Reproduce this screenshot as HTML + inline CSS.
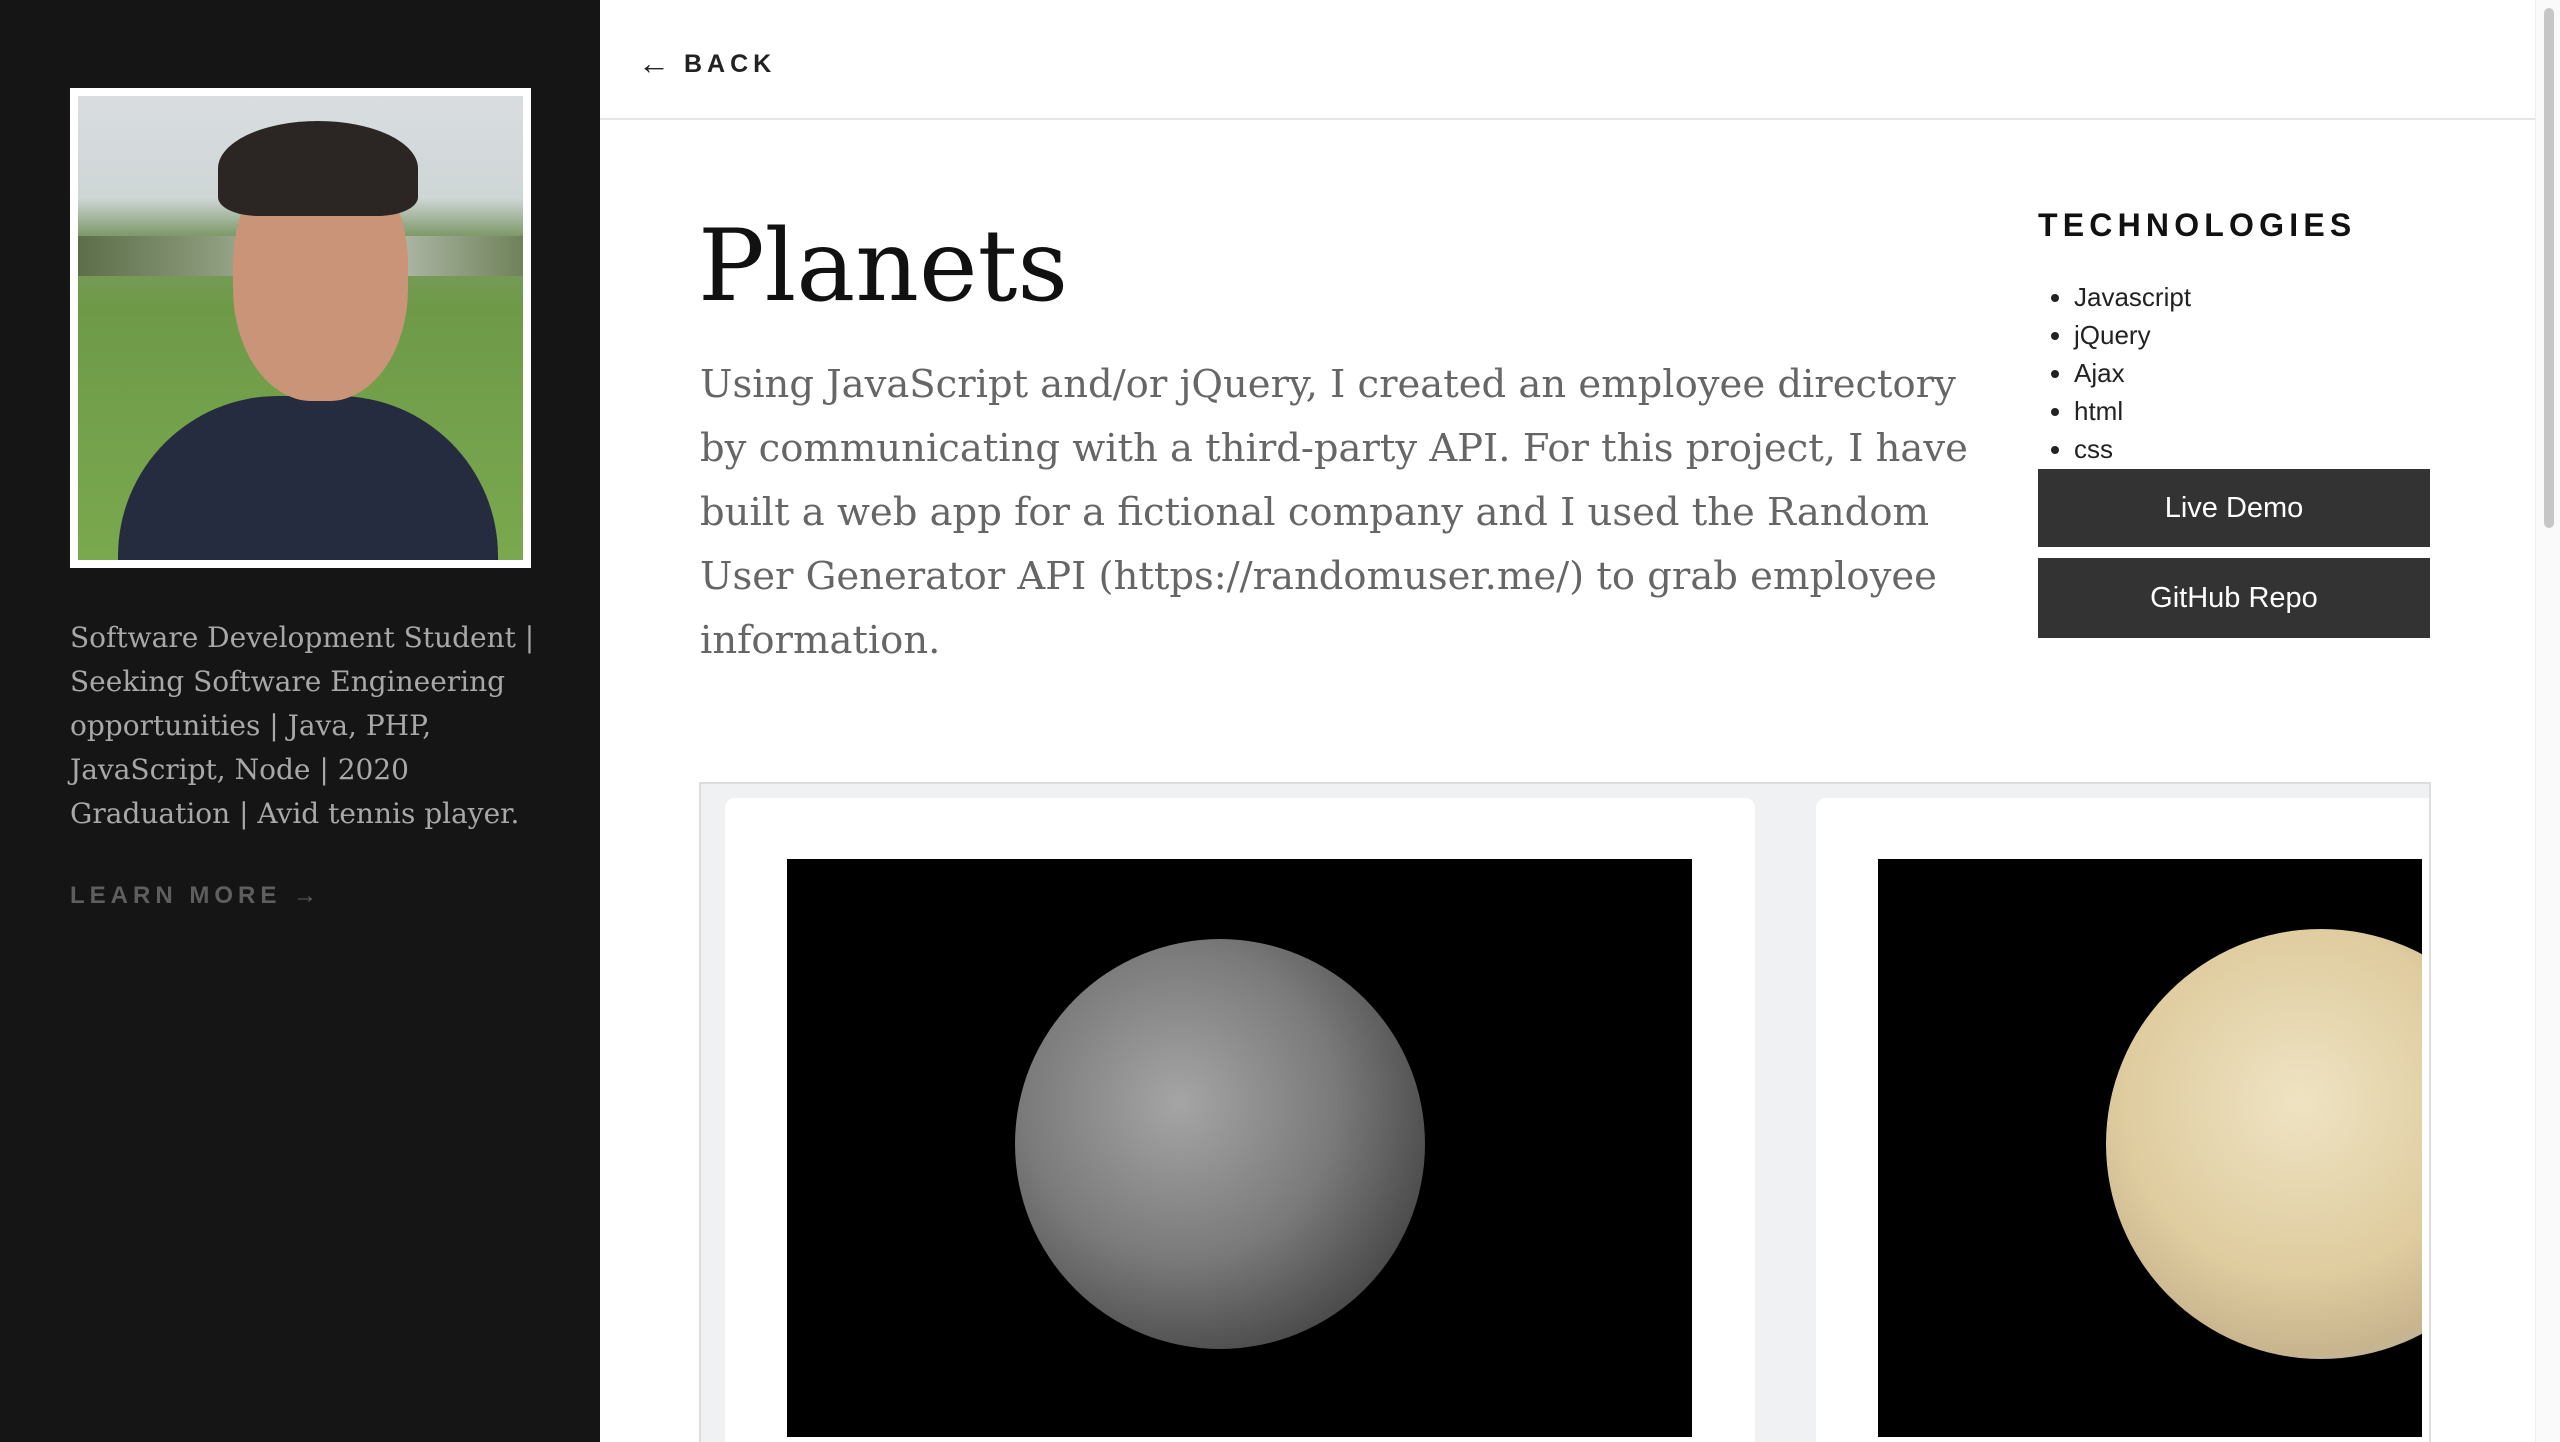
<!DOCTYPE html>
<html><head><meta charset="utf-8">
<style>
*{margin:0;padding:0;box-sizing:border-box}
html,body{width:2560px;height:1442px;overflow:hidden;background:#fff}
body{position:relative;font-family:"Liberation Sans",sans-serif}
.side{position:absolute;left:0;top:0;width:600px;height:1442px;background:#151515}
.photo{position:absolute;left:70px;top:88px;width:461px;height:480px;background:#fff;padding:8px}
.photo .img{width:100%;height:100%;position:relative;overflow:hidden;
 background:linear-gradient(#d9dde0 0%,#cfd6d6 22%,#7f9a6a 30%,#6e9a48 45%,#7aa84e 100%)}
.bio{position:absolute;left:70px;top:616px;width:520px;font-family:"DejaVu Serif","Liberation Serif",serif;font-size:28px;line-height:44px;color:#a8a8a8;white-space:nowrap}
.learn{position:absolute;left:70px;top:882px;font-size:24px;font-weight:bold;letter-spacing:5px;color:#5e5e5e}
.top{position:absolute;left:600px;top:0;width:1935px;height:120px;border-bottom:2px solid #e6e6e6}
.back{position:absolute;left:638px;top:43px;font-size:25px;font-weight:bold;letter-spacing:5px;color:#222}
.back span{font-size:32px;font-weight:normal;letter-spacing:0;margin-right:14px;position:relative;top:2px}
.title{position:absolute;left:698px;top:202px;font-family:"DejaVu Serif","Liberation Serif",serif;font-size:99px;color:#111;line-height:130px}
.para{position:absolute;left:700px;top:353px;font-family:"DejaVu Serif","Liberation Serif",serif;font-size:38.5px;line-height:64px;color:#666;white-space:nowrap}
.tech{position:absolute;left:2038px;top:207px;font-size:32px;font-weight:bold;letter-spacing:5.2px;color:#111}
ul{position:absolute;left:2074px;top:278px;font-size:26px;line-height:38px;color:#222}
.btn{position:absolute;left:2038px;width:392px;background:#333;color:#fff;font-size:29px;text-align:center}
.frame{position:absolute;left:699px;top:782px;width:1732px;height:700px;border:2px solid #ddd;background:#f0f1f2;overflow:hidden}
.card{position:absolute;top:14px;height:700px;background:#fff;border-radius:10px}
.pic{position:absolute;top:859px;height:578px;background:#000;overflow:hidden}
.scroll{position:absolute;left:2535px;top:0;width:25px;height:1442px;background:#fafafa;border-left:1px solid #eee}
.scroll div{position:absolute;left:8px;top:8px;width:10px;height:520px;border-radius:5px;background:#c6c6c6}
</style></head><body>
<div class="side">
 <div class="photo"><div class="img">
  <div style="position:absolute;left:0;top:140px;width:100%;height:40px;background:linear-gradient(90deg,#5d6e4a,#8a9a7a 30%,#c9cfc9 60%,#6f8259)"></div>
  <div style="position:absolute;left:40px;top:300px;width:380px;height:200px;border-radius:160px 160px 0 0;background:#262c40"></div>
  <div style="position:absolute;left:155px;top:55px;width:175px;height:250px;border-radius:45%;background:#c99478"></div>
  <div style="position:absolute;left:140px;top:25px;width:200px;height:95px;border-radius:50% 50% 20% 20%;background:#2b2624"></div>
 </div></div>
 <div class="bio">Software Development Student |<br>Seeking Software Engineering<br>opportunities | Java, PHP,<br>JavaScript, Node | 2020<br>Graduation | Avid tennis player.</div>
 <div class="learn">LEARN MORE →</div>
</div>
<div class="top"></div>
<div class="back"><span>←</span>BACK</div>
<div class="title">Planets</div>
<div class="para">Using JavaScript and/or jQuery, I created an employee directory<br>by communicating with a third-party API. For this project, I have<br>built a web app for a fictional company and I used the Random<br>User Generator API (https://randomuser.me/) to grab employee<br>information.</div>
<div class="tech">TECHNOLOGIES</div>
<ul><li>Javascript</li><li>jQuery</li><li>Ajax</li><li>html</li><li>css</li></ul>
<div class="btn" style="top:469px;height:78px;line-height:78px">Live Demo</div>
<div class="btn" style="top:558px;height:80px;line-height:80px">GitHub Repo</div>
<div class="frame">
 <div class="card" style="left:24px;width:1030px"></div>
 <div class="card" style="left:1115px;width:700px"></div>
</div>
<div class="pic" style="left:787px;width:905px">
 <div style="position:absolute;left:228px;top:80px;width:410px;height:410px;border-radius:50%;background:radial-gradient(circle at 40% 40%,#a5a5a5,#7a7a7a 45%,#3c3c3c 85%,#1a1a1a)"></div>
</div>
<div class="pic" style="left:1878px;width:544px">
 <div style="position:absolute;left:228px;top:70px;width:430px;height:430px;border-radius:50%;background:radial-gradient(circle at 45% 40%,#efe3c3,#dfcc9f 50%,#c8b58e 72%,#a9b5bd 92%)"></div>
</div>
<div class="scroll"><div></div></div>
</body></html>
